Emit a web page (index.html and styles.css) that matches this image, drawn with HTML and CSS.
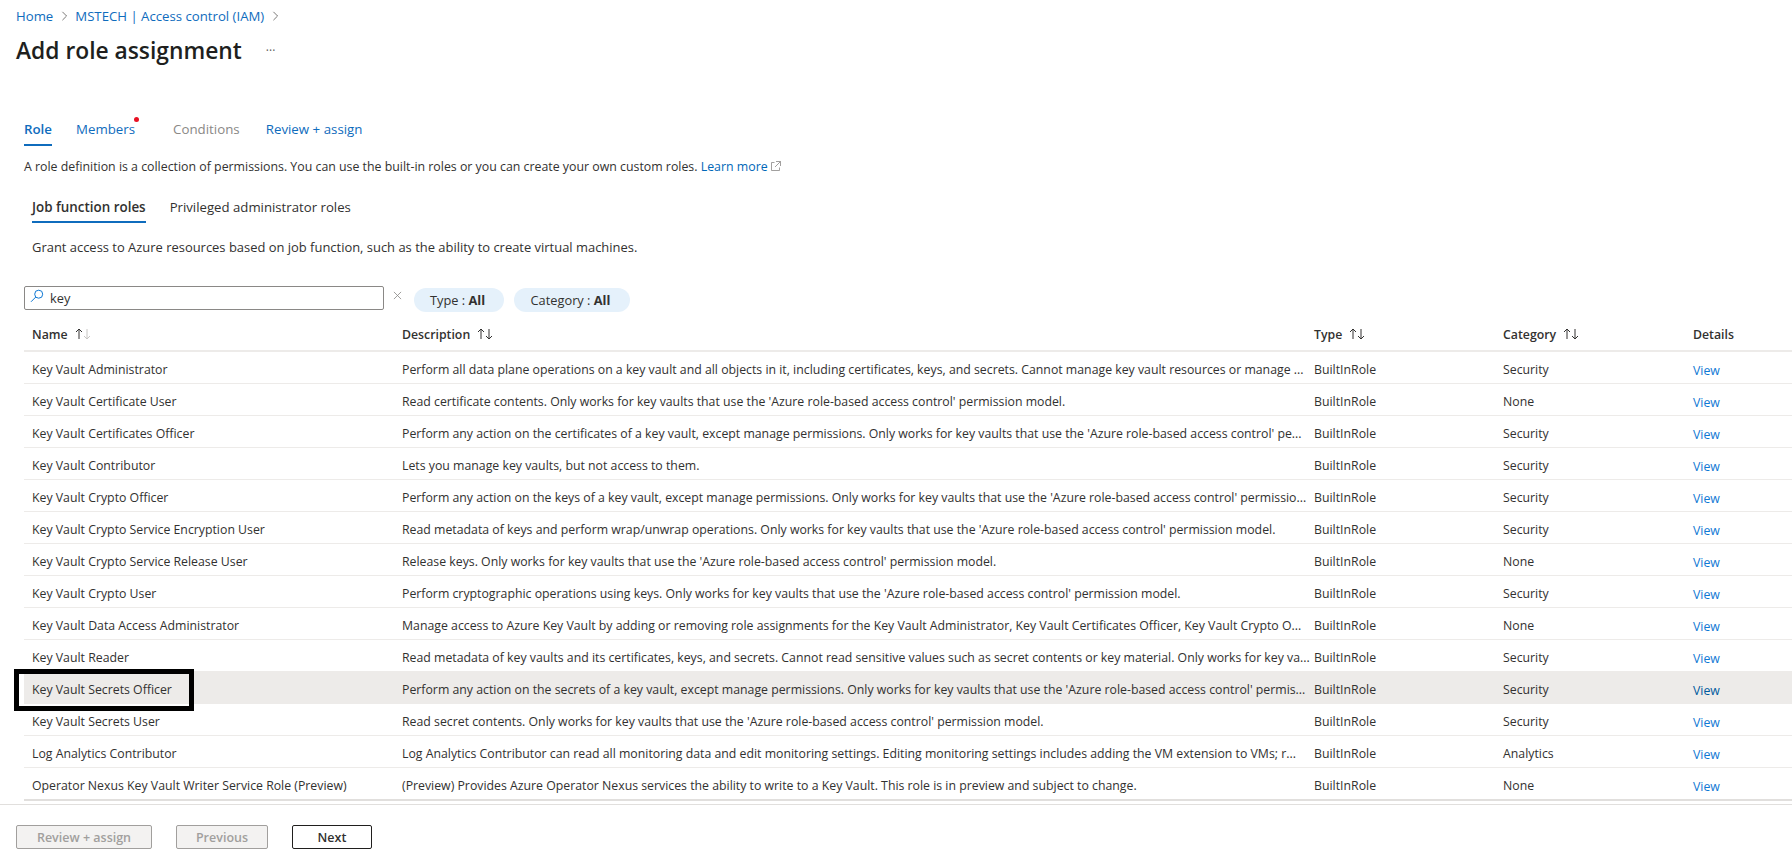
FILE: index.html
```html
<!DOCTYPE html>
<html lang="en">
<head>
<meta charset="utf-8">
<title>Add role assignment</title>
<link rel="stylesheet" href="styles.css">
</head>
<body>
<div class="page">
  <nav class="crumbs">
    <a href="#">Home</a>
    <svg class="chev" viewBox="0 0 8 12"><path d="M1.5 1l5 5-5 5"/></svg>
    <a href="#">MSTECH | Access control (IAM)</a>
    <svg class="chev" viewBox="0 0 8 12"><path d="M1.5 1l5 5-5 5"/></svg>
  </nav>
  <header class="title-row">
    <h1>Add role assignment</h1>
    <span class="more">···</span>
  </header>
  <main class="content">
    <div class="tabs">
      <a class="tab active" href="#">Role</a>
      <a class="tab dotted" href="#">Members</a>
      <span class="tab off">Conditions</span>
      <a class="tab" href="#">Review + assign</a>
    </div>
    <p class="intro">A role definition is a collection of permissions. You can use the built-in roles or you can create your own custom roles. <a href="#">Learn more</a>
      <svg class="ext" viewBox="0 0 10 10"><path d="M3.5 1.5H.5v8h8v-3M5 .5h4.5V5M9.5.5L4 6"/></svg></p>
    <div class="subtabs">
      <span class="subtab current">Job function roles</span>
      <span class="subtab">Privileged administrator roles</span>
    </div>
    <p class="grant">Grant access to Azure resources based on job function, such as the ability to create virtual machines.</p>
    <div class="filters">
      <label class="search">
        <svg class="lens" viewBox="0 0 14 14"><circle cx="8.7" cy="5.2" r="4"/><path d="M5.8 8L1 12.8"/></svg>
        <input type="text" value="key">
      </label>
      <svg class="clear" viewBox="0 0 10 10"><path d="M1 1l8 8M9 1l-8 8"/></svg>
      <span class="pill pill-type">Type : <b>All</b></span>
      <span class="pill pill-cat">Category : <b>All</b></span>
    </div>
    <div class="table">
      <div class="row head">
        <div>Name <svg class="sort" viewBox="0 0 16 12"><path d="M4 11V1M1 4l3-3 3 3"/><path class="faint" d="M12 1v10M9 8l3 3 3-3"/></svg></div>
        <div>Description <svg class="sort" viewBox="0 0 16 12"><path d="M4 11V1M1 4l3-3 3 3"/><path d="M12 1v10M9 8l3 3 3-3"/></svg></div>
        <div>Type <svg class="sort" viewBox="0 0 16 12"><path d="M4 11V1M1 4l3-3 3 3"/><path d="M12 1v10M9 8l3 3 3-3"/></svg></div>
        <div>Category <svg class="sort" viewBox="0 0 16 12"><path d="M4 11V1M1 4l3-3 3 3"/><path d="M12 1v10M9 8l3 3 3-3"/></svg></div>
        <div>Details</div>
      </div>
      <div class="row"><div>Key Vault Administrator</div><div>Perform all data plane operations on a key vault and all objects in it, including certificates, keys, and secrets. Cannot manage key vault resources or manage ...</div><div>BuiltInRole</div><div>Security</div><div><a class="view" href="#">View</a></div></div>
      <div class="row"><div>Key Vault Certificate User</div><div>Read certificate contents. Only works for key vaults that use the 'Azure role-based access control' permission model.</div><div>BuiltInRole</div><div>None</div><div><a class="view" href="#">View</a></div></div>
      <div class="row"><div>Key Vault Certificates Officer</div><div>Perform any action on the certificates of a key vault, except manage permissions. Only works for key vaults that use the 'Azure role-based access control' pe...</div><div>BuiltInRole</div><div>Security</div><div><a class="view" href="#">View</a></div></div>
      <div class="row"><div>Key Vault Contributor</div><div>Lets you manage key vaults, but not access to them.</div><div>BuiltInRole</div><div>Security</div><div><a class="view" href="#">View</a></div></div>
      <div class="row"><div>Key Vault Crypto Officer</div><div>Perform any action on the keys of a key vault, except manage permissions. Only works for key vaults that use the 'Azure role-based access control' permissio...</div><div>BuiltInRole</div><div>Security</div><div><a class="view" href="#">View</a></div></div>
      <div class="row"><div>Key Vault Crypto Service Encryption User</div><div>Read metadata of keys and perform wrap/unwrap operations. Only works for key vaults that use the 'Azure role-based access control' permission model.</div><div>BuiltInRole</div><div>Security</div><div><a class="view" href="#">View</a></div></div>
      <div class="row"><div>Key Vault Crypto Service Release User</div><div>Release keys. Only works for key vaults that use the 'Azure role-based access control' permission model.</div><div>BuiltInRole</div><div>None</div><div><a class="view" href="#">View</a></div></div>
      <div class="row"><div>Key Vault Crypto User</div><div>Perform cryptographic operations using keys. Only works for key vaults that use the 'Azure role-based access control' permission model.</div><div>BuiltInRole</div><div>Security</div><div><a class="view" href="#">View</a></div></div>
      <div class="row"><div>Key Vault Data Access Administrator</div><div>Manage access to Azure Key Vault by adding or removing role assignments for the Key Vault Administrator, Key Vault Certificates Officer, Key Vault Crypto O...</div><div>BuiltInRole</div><div>None</div><div><a class="view" href="#">View</a></div></div>
      <div class="row"><div>Key Vault Reader</div><div>Read metadata of key vaults and its certificates, keys, and secrets. Cannot read sensitive values such as secret contents or key material. Only works for key va...</div><div>BuiltInRole</div><div>Security</div><div><a class="view" href="#">View</a></div></div>
      <div class="row selected"><div>Key Vault Secrets Officer</div><div>Perform any action on the secrets of a key vault, except manage permissions. Only works for key vaults that use the 'Azure role-based access control' permis...</div><div>BuiltInRole</div><div>Security</div><div><a class="view" href="#">View</a></div></div>
      <div class="row"><div>Key Vault Secrets User</div><div>Read secret contents. Only works for key vaults that use the 'Azure role-based access control' permission model.</div><div>BuiltInRole</div><div>Security</div><div><a class="view" href="#">View</a></div></div>
      <div class="row"><div>Log Analytics Contributor</div><div>Log Analytics Contributor can read all monitoring data and edit monitoring settings. Editing monitoring settings includes adding the VM extension to VMs; r...</div><div>BuiltInRole</div><div>Analytics</div><div><a class="view" href="#">View</a></div></div>
      <div class="row last"><div>Operator Nexus Key Vault Writer Service Role (Preview)</div><div>(Preview) Provides Azure Operator Nexus services the ability to write to a Key Vault. This role is in preview and subject to change.</div><div>BuiltInRole</div><div>None</div><div><a class="view" href="#">View</a></div></div>
    </div>
  </main>
  <footer class="actions">
    <button class="btn btn-review" disabled>Review + assign</button>
    <button class="btn btn-prev" disabled>Previous</button>
    <button class="btn btn-next">Next</button>
  </footer>
  <div class="annotation"></div>
</div>
</body>
</html>
```
FILE: styles.css
```css
* { box-sizing: border-box; }
html, body { margin: 0; height: 100%; }
body { background: #fff; color: #323130; font-family: "Open Sans", "Noto Sans", sans-serif; font-size: 13px; overflow: hidden; }
a { color: #0067b8; text-decoration: none; }
.page { position: relative; width: 1792px; height: 867px; overflow: hidden; }

.crumbs { display: flex; align-items: center; gap: 7.5px; height: 32px; padding-left: 16px; font-size: 13.2px; }
.crumbs a { color: #0f6cbd; }
.chev { width: 7px; height: 10px; fill: none; stroke: #605e5c; stroke-width: 1; }

.title-row { display: flex; align-items: center; height: 36px; padding-left: 16px; }
h1 { margin: 0; font-size: 22.8px; font-weight: 600; color: #201f1e; }
.more { margin-left: 24px; color: #605e5c; font-size: 12px; }

.content { padding-left: 24px; }
.tabs { display: flex; gap: 24px; margin-top: 44px; height: 34px; }
.tab { position: relative; height: 34px; line-height: 34px; font-size: 13.3px; color: #0f6cbd; }
.tab.active { font-weight: 600; border-bottom: 2px solid #0f6cbd; }
.tab.off { color: #8a8886; margin-left: 14px; }
.tab.off + .tab { margin-left: 2px; }
.tab.dotted::after { content: ""; position: absolute; right: -4px; top: 5px; width: 5px; height: 5px; border-radius: 50%; background: #e81123; }

.intro { margin: 12px 0 0; height: 18px; line-height: 18px; font-size: 12.35px; color: #323130; }
.ext { width: 10px; height: 10px; fill: none; stroke: #8a8886; stroke-width: .8; }
.subtabs { display: flex; gap: 24px; margin-top: 15px; padding-left: 8px; height: 32px; }
.subtab { height: 32px; line-height: 32px; font-size: 13.2px; color: #323130; }
.subtab.current { font-weight: 600; font-size: 13.4px; border-bottom: 2px solid #0f6cbd; }
.grant { margin: 15px 0 0; padding-left: 8px; height: 18px; line-height: 18px; font-size: 12.95px; }

.filters { position: relative; display: flex; align-items: flex-start; margin-top: 30px; height: 32px; }
.search { display: flex; align-items: center; gap: 6px; width: 360px; height: 24px; border: 1px solid #8a8886; border-radius: 2px; padding-left: 5px; }
.lens { width: 14px; height: 14px; fill: none; stroke: #0f78d4; stroke-width: 1; margin-top: -4px; }
.search input { border: 0; outline: 0; padding: 0; width: 300px; font: inherit; font-size: 12.8px; color: #323130; }
.clear { width: 9px; height: 9px; margin: 5px 12px 0 9px; fill: none; stroke: #8a8886; stroke-width: .9; }
.pill { display: flex; align-items: center; justify-content: center; height: 24px; margin-top: 2px; padding-right: 3px; border-radius: 12px; background: #e5f1fb; color: #323130; white-space: pre; font-size: 12.8px; }
.pill b { font-weight: 700; }
.pill-type { width: 90px; margin-right: 10px; }
.pill-cat { width: 116px; }

.table { font-size: 12.3px; }
.row { display: grid; grid-template-columns: 370px 912px 189px 190px 1fr; align-items: center; height: 32px; padding: 4px 0 0 8px; border-bottom: 1px solid #edebe9; color: #323130; white-space: nowrap; }
.row.head { height: 34px; padding-top: 0; font-weight: 600; border-bottom: 2px solid #edebe9; }
.row.head > div { display: flex; align-items: center; gap: 7px; }
.row.selected { background: #edebe9; }
.row.selected .view { color: #005a9e; }
.row.last { height: 33px; border-bottom: 2px solid #e1dfdd; }
.view { display: inline-block; padding-top: 1px; color: #0f78d4; }
.sort { width: 16px; height: 12px; fill: none; stroke: #323130; stroke-width: 1; }
.sort .faint { stroke: #c8c6c4; }

.actions { display: flex; gap: 24px; margin-top: 3px; height: 63px; padding: 20px 0 0 16px; border-top: 1px solid #e1dfdd; }
.btn { height: 24px; padding: 0; border-radius: 2px; font: inherit; font-size: 12.5px; font-weight: 600; background: #fff; }
.btn-review { width: 136px; }
.btn-prev { width: 92px; }
.btn-next { width: 80px; border: 1px solid #201f1e; color: #323130; }
.btn:disabled { background: #f3f2f1; border: 1px solid #a19f9d; color: #a19f9d; }

.annotation { position: absolute; left: 14px; top: 669px; width: 180px; height: 42px; border: 5px solid #000; }
```
